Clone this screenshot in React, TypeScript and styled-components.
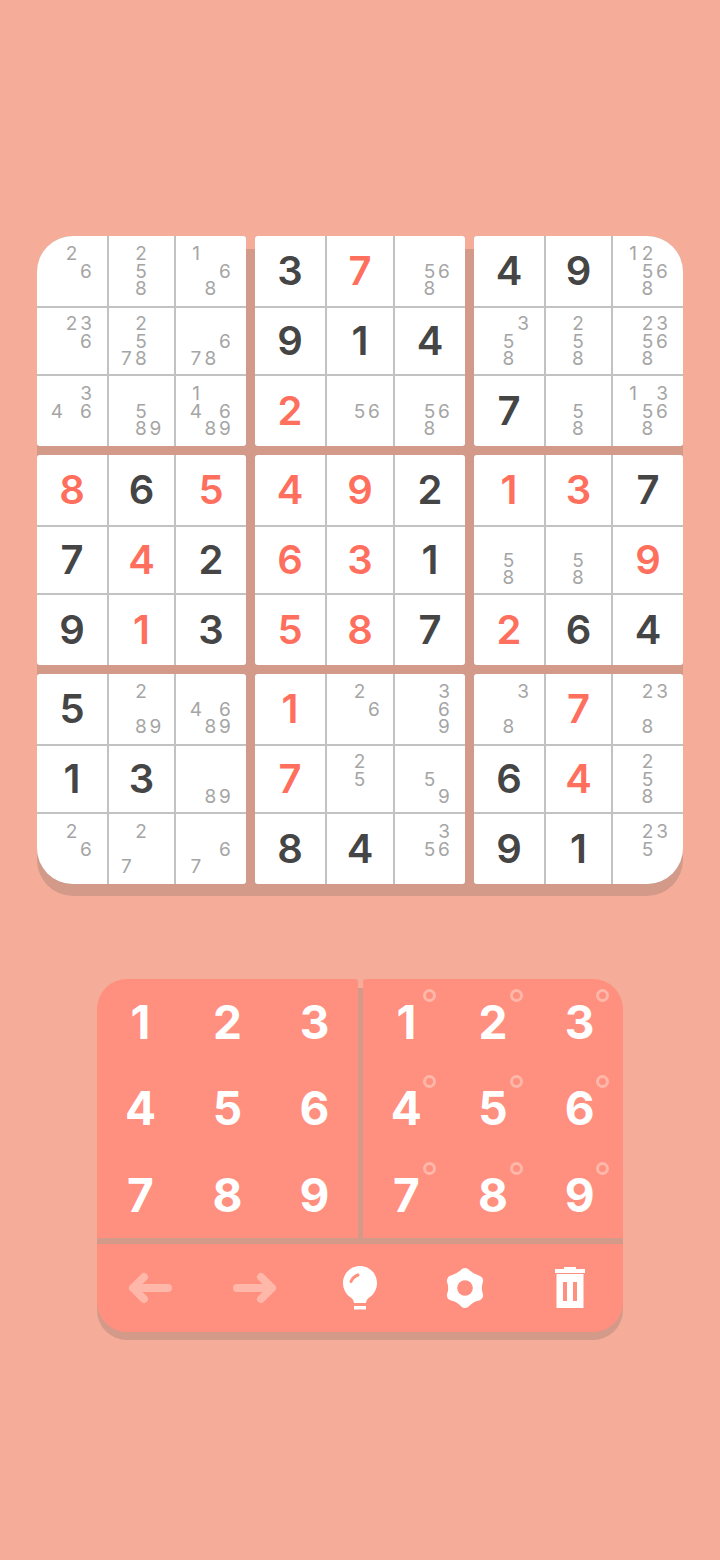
import React from 'react';
import styled, { createGlobalStyle } from 'styled-components';

const SALMON = '#f5ad99';
const SHADOW = '#d49a89';
const CORAL = '#ff8f7e';
const FADED = '#ffb7a9';

const GlobalStyle = createGlobalStyle`
  html, body {
    margin: 0;
    padding: 0;
    background: ${SALMON};
  }
`;

// "*7" = digit entered by the player, "7" = given digit, "258" = pencil marks
const PUZZLE: string[][] = [
  ['26', '258', '168', '3', '*7', '568', '4', '9', '12568'],
  ['236', '2578', '678', '9', '1', '4', '358', '258', '23568'],
  ['346', '589', '14689', '*2', '56', '568', '7', '58', '13568'],
  ['*8', '6', '*5', '*4', '*9', '2', '*1', '*3', '7'],
  ['7', '*4', '2', '*6', '*3', '1', '58', '58', '*9'],
  ['9', '*1', '3', '*5', '*8', '7', '*2', '6', '4'],
  ['5', '289', '4689', '*1', '26', '369', '38', '*7', '238'],
  ['1', '3', '89', '*7', '25', '59', '6', '*4', '258'],
  ['26', '27', '67', '8', '4', '356', '9', '1', '235'],
];

const Page = styled.div`
  width: 720px;
  height: 1560px;
  box-sizing: border-box;
  padding-top: 236px;
  display: flex;
  flex-direction: column;
  align-items: center;
  background: ${SALMON};
  font-family: Inter, 'Open Sans', sans-serif;
`;

const Board = styled.div`
  position: relative;
  display: grid;
  grid-template-columns: 209px 210px 209px;
  grid-template-rows: repeat(3, 210px);
  gap: 9px;

  &::before {
    content: '';
    position: absolute;
    inset: 13px 0 -12px 0;
    border-radius: 36px;
    background: ${SHADOW};
  }
`;

const Box = styled.div<{ $corner: string }>`
  position: relative;
  display: grid;
  grid-template-columns: 70px 1fr 70px;
  grid-template-rows: 70px 1fr 70px;
  gap: 2px;
  overflow: hidden;
  background: #c2c2c2;
  border-radius: ${(p) => p.$corner};
`;

const Cell = styled.div<{ $entered?: boolean }>`
  display: flex;
  align-items: center;
  justify-content: center;
  background: #fff;
  font-size: 40px;
  font-weight: 600;
  line-height: 1;
  color: ${(p) => (p.$entered ? '#ff6f5e' : '#454545')};
`;

const Notes = styled.div`
  display: grid;
  grid-template-columns: repeat(3, 14.5px);
  grid-template-rows: repeat(3, 17.5px);
  transform: translateX(-0.5px);
`;

const Note = styled.span<{ $digit: number }>`
  grid-column: ${(p) => ((p.$digit - 1) % 3) + 1};
  grid-row: ${(p) => Math.floor((p.$digit - 1) / 3) + 1};
  display: flex;
  align-items: center;
  justify-content: center;
  font-size: 19px;
  line-height: 17px;
  font-weight: 400;
  color: #a5a5a5;
`;

const Keypad = styled.div`
  position: relative;
  width: 526px;
  margin-top: 95px;
  display: grid;
  grid-template-columns: 261px 260px;
  grid-template-rows: 259px 88px;
  gap: 6px 5px;

  &::before {
    content: '';
    position: absolute;
    inset: 9px 0 -8px 0;
    border-radius: 30px;
    background: ${SHADOW};
  }
`;

const KeyPanel = styled.div<{ $corner: string }>`
  position: relative;
  display: grid;
  grid-template-columns: repeat(3, 1fr);
  grid-template-rows: repeat(3, 1fr);
  background: ${CORAL};
  border-radius: ${(p) => p.$corner};
`;

const Key = styled.div`
  position: relative;
  display: flex;
  align-items: center;
  justify-content: center;
  color: #fff;
  font-size: 46px;
  font-weight: 700;
  line-height: 1;
`;

const PencilDot = styled.span`
  position: absolute;
  left: 60px;
  top: 10px;
  width: 13px;
  height: 13px;
  box-sizing: border-box;
  border: 3.5px solid ${FADED};
  border-radius: 50%;
`;

const ToolBar = styled.div`
  position: relative;
  grid-column: 1 / -1;
  display: grid;
  grid-template-columns: repeat(5, 1fr);
  background: ${CORAL};
  border-radius: 0 0 30px 30px;
`;

const Tool = styled.div`
  display: flex;
  align-items: center;
  justify-content: center;
`;

const ArrowLeft = () => (
  <svg width="46" height="32" viewBox="0 0 46 32" fill="none" stroke={FADED} strokeWidth="8" strokeLinecap="round" strokeLinejoin="round">
    <path d="M41 16H6M17 5L6 16l11 11" />
  </svg>
);

const ArrowRight = () => (
  <svg width="46" height="32" viewBox="0 0 46 32" fill="none" stroke={FADED} strokeWidth="8" strokeLinecap="round" strokeLinejoin="round">
    <path d="M5 16h35M29 5l11 11-11 11" />
  </svg>
);

const Bulb = () => (
  <svg width="36" height="44" viewBox="0 0 36 44">
    <path
      fill="#fff"
      d="M18 0C8.600 0 1 7.600 1 17c0 6.300 3.200 11.500 7.700 14.600 2 1.400 2.900 3.100 3.300 5.400h12c.400-2.300 1.300-4 3.300-5.400C31.800 28.500 35 23.300 35 17 35 7.600 27.400 0 18 0z"
    />
    <rect x="12" y="40" width="12" height="3.500" fill="#fff" />
    <path d="M9 15.500c1.200-3 3.500-5.200 7-6.500" fill="none" stroke={CORAL} strokeWidth="3" strokeLinecap="round" />
  </svg>
);

// six soft lobes: thick round-joined stroke around a slightly pinched hexagon
const Gear = () => (
  <svg width="44" height="44" viewBox="0 0 44 44">
    <path
      fill="#fff"
      stroke="#fff"
      strokeWidth="11"
      strokeLinejoin="round"
      d="M22 7.500Q27.250 13 34.600 14.750Q32 22 34.600 29.250Q27.250 31 22 36.500Q16.750 31 9.400 29.250Q12 22 9.400 14.750Q16.750 13 22 7.500z"
    />
    <circle cx="22" cy="22" r="7.800" fill={CORAL} />
  </svg>
);

const Trash = () => (
  <svg width="30" height="42" viewBox="0 0 30 42">
    <path
      fill="#fff"
      fillRule="evenodd"
      d="M9 0h12v2h9v4H0V2h9zM1.500 7h27v34h-27zM8 15v19h4V15zm10 0v19h4V15z"
    />
  </svg>
);

function boxCorner(row: number, col: number) {
  const big = '36px';
  const small = '3px';
  const tl = row === 0 && col === 0 ? big : small;
  const tr = row === 0 && col === 2 ? big : small;
  const br = row === 2 && col === 2 ? big : small;
  const bl = row === 2 && col === 0 ? big : small;
  return `${tl} ${tr} ${br} ${bl}`;
}

function SudokuCell({ value }: { value: string }) {
  if (value.length > 1 && value[0] !== '*') {
    return (
      <Cell>
        <Notes>
          {value.split('').map((d) => (
            <Note key={d} $digit={Number(d)}>
              {d}
            </Note>
          ))}
        </Notes>
      </Cell>
    );
  }
  return <Cell $entered={value[0] === '*'}>{value.replace('*', '')}</Cell>;
}

const BOX_INDEX = [0, 1, 2];
const DIGITS = [1, 2, 3, 4, 5, 6, 7, 8, 9];

export default function App() {
  return (
    <Page>
      <GlobalStyle />
      <Board>
        {BOX_INDEX.map((boxRow) =>
          BOX_INDEX.map((boxCol) => (
            <Box key={`${boxRow}-${boxCol}`} $corner={boxCorner(boxRow, boxCol)}>
              {BOX_INDEX.map((r) =>
                BOX_INDEX.map((c) => (
                  <SudokuCell key={`${r}-${c}`} value={PUZZLE[boxRow * 3 + r][boxCol * 3 + c]} />
                ))
              )}
            </Box>
          ))
        )}
      </Board>

      <Keypad>
        <KeyPanel $corner="30px 3px 0 0">
          {DIGITS.map((d) => (
            <Key key={d}>{d}</Key>
          ))}
        </KeyPanel>
        <KeyPanel $corner="3px 30px 0 0">
          {DIGITS.map((d) => (
            <Key key={d}>
              {d}
              <PencilDot />
            </Key>
          ))}
        </KeyPanel>
        <ToolBar>
          <Tool>
            <ArrowLeft />
          </Tool>
          <Tool>
            <ArrowRight />
          </Tool>
          <Tool>
            <Bulb />
          </Tool>
          <Tool>
            <Gear />
          </Tool>
          <Tool>
            <Trash />
          </Tool>
        </ToolBar>
      </Keypad>
    </Page>
  );
}
